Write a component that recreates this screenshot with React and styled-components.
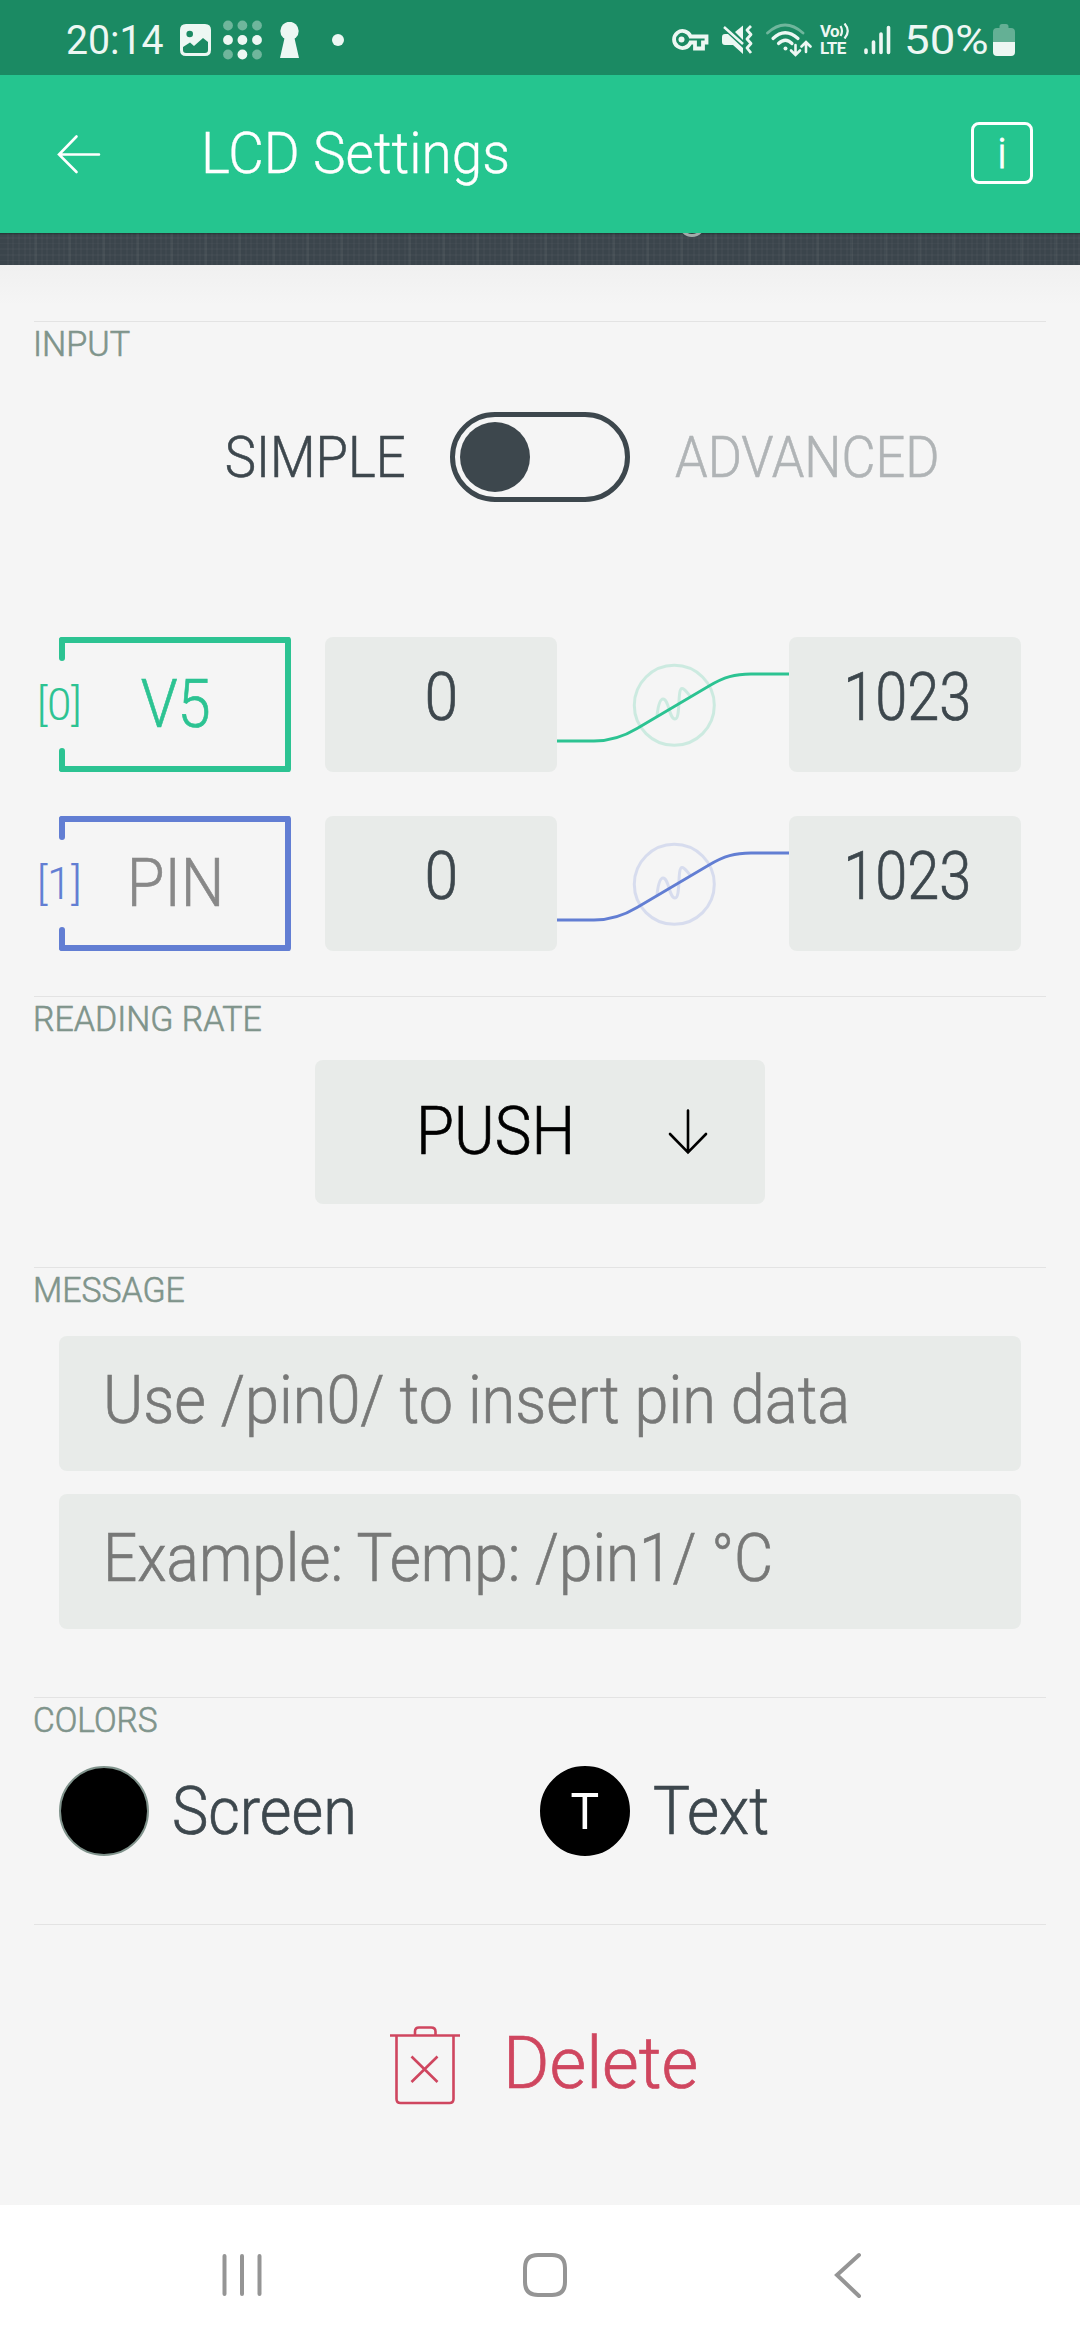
import React from "react";
import styled, { createGlobalStyle } from "styled-components";

const color = {
  statusBar: "#1b8a63",
  header: "#25c58f",
  green: "#2cc392",
  blue: "#627ed3",
  ink: "#3d474d",
  muted: "#b0b4b6",
  heading: "#7f948b",
  field: "#e8ebe9",
  placeholder: "#777877",
  page: "#f5f5f5",
  rule: "#e3e3e3",
  danger: "#cf465f",
  statusInk: "#edf7f3",
};

const GlobalStyle = createGlobalStyle`
  *, *::before, *::after { box-sizing: border-box; }
  body {
    margin: 0;
    background: ${color.page};
    font-family: Roboto, "Liberation Sans", sans-serif;
    font-weight: 300;
  }
  svg { display: block; flex: none; }
`;

const Screen = styled.div`
  display: flex;
  flex-direction: column;
  width: 1080px;
  height: 2340px;
  overflow: hidden;
  background: ${color.page};
`;

/* Condensed text: squeeze narrows the glyphs, origin keeps one side fixed,
   thicken adds a thin outline (in em) to the light face. */
const Text = styled.span`
  display: block;
  flex: none;
  white-space: nowrap;
  font-size: ${(p) => p.$size}px;
  font-weight: ${(p) => p.$weight || 300};
  line-height: 1.2;
  color: ${(p) => p.$color || color.ink};
  -webkit-text-stroke: ${(p) => p.$thicken ?? 0.01}em currentColor;
  transform: scaleX(${(p) => p.$squeeze || 1});
  transform-origin: ${(p) => p.$origin || "left"} center;
`;

/* ---------- status bar ---------- */

const StatusBar = styled.div`
  display: flex;
  align-items: center;
  justify-content: space-between;
  height: 75px;
  padding: 5px 65px 0 66px;
  background: ${color.statusBar};
`;

const StatusGroup = styled.div`
  display: flex;
  align-items: center;
`;

const StatusItem = styled.div`
  flex: none;
  width: ${(p) => p.$width}px;
  margin-left: ${(p) => p.$gap || 0}px;
`;

const StatusText = styled(Text).attrs({
  $size: 40,
  $weight: 400,
  $thicken: 0,
  $color: color.statusInk,
})`
  padding-top: 1px;
`;

const Network = styled.div`
  display: flex;
  flex-direction: column;
  height: 35px;
`;

const NetworkLine = styled.div`
  display: flex;
  align-items: center;
  height: 17.5px;
  font-size: 17px;
  line-height: 17.5px;
  font-weight: 700;
  letter-spacing: -0.6px;
  color: ${color.statusInk};
`;

const PhotoIcon = () => (
  <svg width="31" height="32" viewBox="0 0 31 32">
    <path
      fillRule="evenodd"
      fill={color.statusInk}
      d="M6 0H25Q31 0 31 6V26Q31 32 25 32H6Q0 32 0 26V6Q0 0 6 0ZM3 23V26Q3 29 6 29H25Q28 29 28 26V18L23 14L14 22L10 18.500Z"
    />
    <circle cx="9.700" cy="10" r="3.300" fill={color.statusBar} />
  </svg>
);

const DotsIcon = () => (
  <svg width="40" height="40" viewBox="0 0 40 40" fill={color.statusInk}>
    {[5.5, 20, 34.5].map((y, r) =>
      [6, 20.4, 35].map((x, c) => (
        <circle
          key={`${r}${c}`}
          cx={x}
          cy={y}
          r="4.900"
          opacity={r === 1 || (r === 2 && c === 1) ? 1 : 0.4}
        />
      ))
    )}
  </svg>
);

const KeyholeIcon = () => (
  <svg width="21" height="36" viewBox="0 0 21 36" fill={color.statusInk}>
    <circle cx="10.500" cy="9" r="9.200" />
    <path d="M6 14H15L20 36H1Z" />
  </svg>
);

const DotIcon = () => (
  <svg width="12" height="12" viewBox="0 0 12 12">
    <circle cx="6" cy="6" r="6" fill={color.statusInk} />
  </svg>
);

const KeyIcon = () => (
  <svg width="38" height="22" viewBox="0 0 38 22">
    <path
      d="M19.500 7.500H35.500V13.500H32V19.500H24V13.500H19.500A8.500 8.500 0 1 1 19.500 7.500Z"
      fill="none"
      stroke={color.statusInk}
      strokeWidth="3.800"
    />
    <circle cx="10.500" cy="10.500" r="3" fill={color.statusInk} />
  </svg>
);

const MuteIcon = () => (
  <svg width="31" height="30" viewBox="0 0 31 30">
    <path d="M13 7L21 0.500V15Z" fill={color.statusInk} />
    <path d="M3 9H6L21 23V29L11 20H3Q0 20 0 17V12Q0 9 3 9Z" fill={color.statusInk} />
    <path d="M2 2L21 19" stroke={color.statusInk} strokeWidth="2.500" />
    <path
      d="M29 1L25 5L29 9.500L25 14L29 18.500L25 23L29 28"
      fill="none"
      stroke={color.statusInk}
      strokeWidth="2.800"
      strokeLinejoin="round"
    />
  </svg>
);

const WifiIcon = () => (
  <svg width="46" height="34" viewBox="0 0 46 34" fill="none" stroke={color.statusInk} strokeLinecap="round">
    <path d="M1.500 10Q19 -6 37 10" strokeWidth="2.800" opacity="0.400" />
    <path d="M7 15.500Q19 4 32 15.500" strokeWidth="3.200" />
    <path d="M12.500 20.500Q19.500 14 26 20.500" strokeWidth="3.200" />
    <circle cx="19.500" cy="25.500" r="2" fill={color.statusInk} stroke="none" />
    <path d="M29.500 22V31.500M25 27.500L29.500 32L34 27.500" strokeWidth="2.600" />
    <path d="M40 29V19.500M35.500 23.500L40 19L44.500 23.500" strokeWidth="2.600" />
  </svg>
);

const VoiceWaves = () => (
  <svg width="11" height="16" viewBox="0 0 11 16" fill="none" stroke={color.statusInk} strokeWidth="2.200">
    <path d="M1.500 3Q4.500 8 1.500 13M5.500 0.500Q12 8 5.500 15.500" />
  </svg>
);

const SignalIcon = () => (
  <svg width="28" height="30" viewBox="0 0 28 30" stroke={color.statusInk} strokeWidth="3.600" strokeLinecap="round">
    <path d="M3 25V27.500M10.500 17V27.500M18 9V27.500M25.500 2.500V27.500" />
  </svg>
);

const BatteryIcon = () => (
  <svg width="22" height="32" viewBox="0 0 22 32" fill={color.statusInk}>
    <path d="M0 18V8Q0 4 4 4H6.500V2.500Q6.500 0 9 0H13Q15.500 0 15.500 2.500V4H18Q22 4 22 8V18Z" opacity="0.350" />
    <path d="M0 18H22V28Q22 32 18 32H4Q0 32 0 28Z" />
  </svg>
);

/* ---------- header ---------- */

const Header = styled.header`
  display: flex;
  align-items: center;
  height: 158px;
  padding: 0 47px 2px 56px;
  background: ${color.header};
`;

const Title = styled.h1`
  flex: 1;
  margin: 3px 0 0 99px;
  font-weight: 300;
`;

const InfoButton = styled.div`
  display: flex;
  align-items: center;
  justify-content: center;
  width: 62px;
  height: 62px;
  padding-top: 2px;
  border: 3px solid #fff;
  border-radius: 8px;
`;

const BackArrow = () => (
  <svg width="46" height="42" viewBox="0 0 46 42" fill="none" stroke="#fff" strokeWidth="2.600" strokeLinecap="round">
    <path d="M3 22.500H43M20.500 4.500L3 22.500L20.500 40" />
  </svg>
);

/* ---------- preview strip ---------- */

const PreviewStrip = styled.div`
  display: flex;
  height: 32px;
  padding-left: 678px;
  background:
    linear-gradient(to bottom, rgba(20, 40, 35, 0.6) 0, rgba(20, 40, 35, 0) 2px),
    repeating-linear-gradient(to right, transparent 0 31px, rgba(255, 255, 255, 0.03) 31px 34px),
    repeating-linear-gradient(to right, transparent 0 3.67px, rgba(255, 255, 255, 0.025) 3.67px 5.67px),
    repeating-linear-gradient(to bottom, transparent 0 4px, rgba(255, 255, 255, 0.025) 4px 5.67px),
    #3b454c;
  background-position: 0 0, 3px 0, 3px 0, 0 0, 0 0;
`;

const StripCircle = () => (
  <svg width="28" height="6" viewBox="0 0 28 6">
    <circle cx="14" cy="-9.500" r="12" fill="none" stroke="#a3abaa" strokeWidth="3" />
  </svg>
);

/* ---------- sections ---------- */

const Content = styled.main`
  flex: 1;
  padding: 56px 34px 0;
  background: linear-gradient(#f0f0f0, ${color.page} 40px);
`;

const Section = styled.section`
  height: ${(p) => p.$height}px;
  border-top: 1px solid ${color.rule};
`;

const Heading = styled.h2`
  display: flex;
  align-items: center;
  height: 44px;
  padding-top: 2px;
  margin: 0 0 ${(p) => p.$after}px -1px;
  font-weight: 300;
`;

const HeadingText = styled(Text).attrs({
  $size: 35,
  $thicken: 0.018,
  $color: color.heading,
})``;

const ModeRow = styled.div`
  display: grid;
  grid-template-columns: 1fr 180px 1fr;
  align-items: center;
  column-gap: 44px;
  margin-bottom: 135px;
`;

const ModeSide = styled.div`
  display: flex;
  padding-left: 1px;
  justify-content: ${(p) => (p.$end ? "flex-end" : "flex-start")};
`;

const Toggle = styled.div`
  display: flex;
  height: 90px;
  padding: 5px;
  border: 5px solid ${color.ink};
  border-radius: 45px;
`;

const Knob = styled.div`
  width: 70px;
  height: 70px;
  border-radius: 50%;
  background: ${color.ink};
`;

const PinRows = styled.div`
  display: flex;
  flex-direction: column;
  gap: 44px;
  padding: 0 25px;
`;

const PinRow = styled.div`
  display: grid;
  grid-template-columns: 232px 34px 232px 232px 232px;
  height: 135px;
`;

const PinBox = styled.div`
  position: relative;
  display: flex;
  align-items: center;
  justify-content: center;
  padding-left: 7px;
  border: 6px solid ${(p) => p.$color};
  border-left: 0;
  border-radius: 3px;

  &::before,
  &::after {
    content: "";
    position: absolute;
    left: 0;
    width: 6px;
    height: 24px;
    background: ${(p) => p.$color};
  }
  &::before { top: -6px; border-radius: 3px 0 3px 3px; }
  &::after { bottom: -6px; border-radius: 3px 3px 0 3px; }
`;

const PinIndex = styled.div`
  position: absolute;
  left: -22px;
  top: 36px;
`;

const NumberField = styled.div`
  grid-column: ${(p) => p.$column};
  display: flex;
  align-items: center;
  justify-content: center;
  padding: 0 0 14px ${(p) => p.$shift || 0}px;
  border-radius: 8px;
  background: ${color.field};
`;

const Curve = ({ stroke }) => (
  <svg width="232" height="135" viewBox="0 0 232 135" fill="none" stroke={stroke}>
    <g opacity="0.200" strokeWidth="3">
      <circle cx="117.300" cy="68.300" r="40" />
      <path d="M100 79C101 70 103 62 106 62C112 62 112 82 118 82C124 82 120 51.500 125 51.500C128 51.500 130 56 134 60" />
    </g>
    <path
      d="M0 104H37C53 104 66 100 80 91.500L152 49C167 40 178 37 194 37H232"
      strokeWidth="2.800"
    />
  </svg>
);

const SelectButton = styled.div`
  display: flex;
  align-items: center;
  justify-content: space-between;
  width: 450px;
  height: 144px;
  margin: 0 auto;
  padding: 0 57px 0 101px;
  border-radius: 8px;
  background: ${color.field};
`;

const DownArrow = () => (
  <svg width="40" height="46" viewBox="0 0 40 46" fill="none" stroke="#000" strokeWidth="2.600" strokeLinecap="round">
    <path d="M20 1.500V43.500M2 25L20 43.500L38 25" />
  </svg>
);

const MessageFields = styled.div`
  display: flex;
  flex-direction: column;
  gap: 23px;
  padding: 0 25px;
`;

const MessageField = styled.div`
  display: flex;
  align-items: center;
  height: 135px;
  padding: 0 44px 5px;
  border-radius: 8px;
  background: ${color.field};
`;

const ColorRow = styled.div`
  display: grid;
  grid-template-columns: 481px 1fr;
  padding: 0 25px;
`;

const ColorItem = styled.div`
  display: flex;
  align-items: center;
  gap: 23px;
`;

const ColorName = styled(Text)`
  margin-top: 2px;
`;

const Swatch = styled.div`
  display: flex;
  align-items: center;
  justify-content: center;
  width: 90px;
  height: 90px;
  padding-top: 2px;
  border: 2px solid ${(p) => p.$border};
  border-radius: 50%;
  background: #000;
`;

const DeleteRow = styled.div`
  display: flex;
  align-items: center;
  gap: 42px;
  padding: 96px 0 0 355px;
`;

const DeleteLabel = styled(Text)`
  margin-bottom: 3px;
`;

const TrashIcon = () => (
  <svg width="72" height="80" viewBox="0 0 72 80" fill="none" stroke={color.danger} strokeWidth="2.600">
    <path d="M1 9.500H71" />
    <path d="M26 9V5.500Q26 1.500 30 1.500H42Q46.500 1.500 46.500 5.500V9" />
    <path d="M7.500 10V73Q7.500 77 11.500 77H60.500Q64.500 77 64.500 73V10" />
    <path d="M22.500 30.500L48.500 56M48.500 30.500L22.500 56" />
  </svg>
);

/* ---------- navigation bar ---------- */

const NavBar = styled.nav`
  display: grid;
  grid-template-columns: repeat(3, 1fr);
  align-items: center;
  justify-items: center;
  height: 135px;
  padding: 5px 81px 0 91px;
  background: #fff;
`;

const NavIcon = styled.svg.attrs({ width: 48, height: 48, viewBox: "0 0 48 48" })`
  fill: none;
  stroke: #959595;
  stroke-width: 4;
  stroke-linecap: round;
`;

const pins = [
  { index: "[0]", name: "V5", stroke: color.green, nameColor: color.green, squeeze: 0.905 },
  { index: "[1]", name: "PIN", stroke: color.blue, nameColor: "#888", squeeze: 0.93 },
];

export default function App() {
  return (
    <Screen>
      <GlobalStyle />
      <StatusBar>
        <StatusGroup>
          <StatusItem $width={100}>
            <StatusText $squeeze={0.98}>20:14</StatusText>
          </StatusItem>
          <StatusItem $width={31} $gap={14}><PhotoIcon /></StatusItem>
          <StatusItem $width={40} $gap={11}><DotsIcon /></StatusItem>
          <StatusItem $width={21} $gap={17}><KeyholeIcon /></StatusItem>
          <StatusItem $width={12} $gap={32}><DotIcon /></StatusItem>
        </StatusGroup>
        <StatusGroup>
          <StatusItem $width={38}><KeyIcon /></StatusItem>
          <StatusItem $width={31} $gap={13}><MuteIcon /></StatusItem>
          <StatusItem $width={46} $gap={13}><WifiIcon /></StatusItem>
          <StatusItem $width={31} $gap={8}>
            <Network>
              <NetworkLine>Vo<VoiceWaves /></NetworkLine>
              <NetworkLine>LTE</NetworkLine>
            </Network>
          </StatusItem>
          <StatusItem $width={28} $gap={12}><SignalIcon /></StatusItem>
          <StatusItem $width={84} $gap={13}>
            <StatusText $squeeze={1.14}>50%</StatusText>
          </StatusItem>
          <StatusItem $width={22} $gap={5}><BatteryIcon /></StatusItem>
        </StatusGroup>
      </StatusBar>

      <Header>
        <BackArrow />
        <Title>
          <Text $size={57} $squeeze={0.962} $thicken={0.006} $color="#fff">LCD Settings</Text>
        </Title>
        <InfoButton>
          <Text $size={42} $origin="center" $thicken={0.02} $color="#fff">i</Text>
        </InfoButton>
      </Header>

      <PreviewStrip><StripCircle /></PreviewStrip>

      <Content>
        <Section $height={675}>
          <Heading $after={46}>
            <HeadingText $squeeze={0.975}>INPUT</HeadingText>
          </Heading>
          <ModeRow>
            <ModeSide $end>
              <Text $size={57.5} $squeeze={0.915} $origin="right">SIMPLE</Text>
            </ModeSide>
            <Toggle><Knob /></Toggle>
            <ModeSide>
              <Text $size={57.5} $squeeze={0.909} $color={color.muted}>ADVANCED</Text>
            </ModeSide>
          </ModeRow>
          <PinRows>
            {pins.map((pin) => (
              <PinRow key={pin.index}>
                <PinBox $color={pin.stroke}>
                  <PinIndex>
                    <Text $size={44} $squeeze={0.98} $thicken={0.004} $color={pin.stroke}>{pin.index}</Text>
                  </PinIndex>
                  <Text $size={66} $squeeze={pin.squeeze} $origin="center" $color={pin.nameColor}>
                    {pin.name}
                  </Text>
                </PinBox>
                <NumberField $column={3}>
                  <Text $size={66} $squeeze={0.92} $origin="center">0</Text>
                </NumberField>
                <Curve stroke={pin.stroke} />
                <NumberField $column={5} $shift={5}>
                  <Text $size={66} $squeeze={0.875} $origin="center">1023</Text>
                </NumberField>
              </PinRow>
            ))}
          </PinRows>
        </Section>

        <Section $height={271}>
          <Heading $after={19}>
            <HeadingText $squeeze={0.968}>READING RATE</HeadingText>
          </Heading>
          <SelectButton>
            <Text $size={66} $squeeze={0.937} $color="#000">PUSH</Text>
            <DownArrow />
          </SelectButton>
        </Section>

        <Section $height={430}>
          <Heading $after={24}>
            <HeadingText $squeeze={0.965}>MESSAGE</HeadingText>
          </Heading>
          <MessageFields>
            <MessageField>
              <Text $size={66} $squeeze={0.927} $color={color.placeholder}>Use /pin0/ to insert pin data</Text>
            </MessageField>
            <MessageField>
              <Text $size={66} $squeeze={0.913} $color={color.placeholder}>Example: Temp: /pin1/ °C</Text>
            </MessageField>
          </MessageFields>
        </Section>

        <Section $height={227}>
          <Heading $after={24}>
            <HeadingText $squeeze={0.955}>COLORS</HeadingText>
          </Heading>
          <ColorRow>
            <ColorItem>
              <Swatch $border="#80938c" />
              <ColorName $size={66} $squeeze={0.927}>Screen</ColorName>
            </ColorItem>
            <ColorItem>
              <Swatch $border="#000">
                <Text $size={50} $weight={400} $thicken={0} $squeeze={0.96} $origin="center" $color="#fff">T</Text>
              </Swatch>
              <ColorName $size={66} $squeeze={0.939}>Text</ColorName>
            </ColorItem>
          </ColorRow>
        </Section>

        <Section $height={280}>
          <DeleteRow>
            <TrashIcon />
            <DeleteLabel $size={72} $squeeze={0.985} $color={color.danger}>Delete</DeleteLabel>
          </DeleteRow>
        </Section>
      </Content>

      <NavBar>
        <NavIcon><path d="M6.500 5V43M24 5V43M41.500 5V43" /></NavIcon>
        <NavIcon><path d="M17 4H31Q44 4 44 17V31Q44 44 31 44H17Q4 44 4 31V17Q4 4 17 4Z" /></NavIcon>
        <NavIcon><path d="M35 4L13 24L35 45" /></NavIcon>
      </NavBar>
    </Screen>
  );
}
